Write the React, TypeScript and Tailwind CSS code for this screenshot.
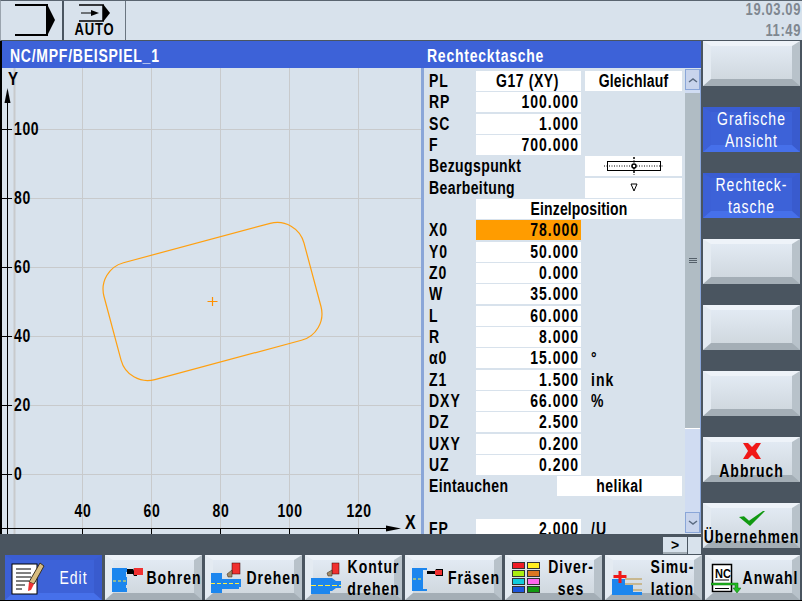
import type { ReactNode } from "react"

const FONT = "font-['Liberation_Sans',sans-serif]"

// narrow bitmap look of the panel font: small size stretched upward
function T({ children, className = "" }: { children: ReactNode; className?: string }) {
  return <span className={`inline-block scale-y-125 whitespace-nowrap ${className}`}>{children}</span>
}

// Softkey with bevelled edges
function Softkey({ active, children, className = "" }: { active?: boolean; children?: ReactNode; className?: string }) {
  const bevel = active
    ? "border-t-[#3a5dd2] border-l-[#3c60d6] border-r-[#395bce] border-b-[#4670ea] bg-[#3d62d8] text-white"
    : "border-t-[#eef3f9] border-l-[#e4ebf2] border-r-[#b8c2ca] border-b-[#a4aeb6] bg-gradient-to-b from-[#e2eaf3] to-[#d0d8df] text-black"
  return (
    <div className={`border-t-[5px] border-l-[8px] border-r-[8px] border-b-[7px] h-[45px] box-border ${bevel} ${className}`}>
      <div className="-mx-[8px] -mt-[5px] -mb-[7px] h-[45px] flex items-center">{children}</div>
    </div>
  )
}

function Label({ lines, className = "" }: { lines: string[]; className?: string }) {
  return (
    <div className={`text-center font-bold text-[14px] leading-[22px] tracking-[1px] ${className}`}>
      {lines.map((l) => (
        <div key={l}>
          <T>{l}</T>
        </div>
      ))}
    </div>
  )
}

function EditIcon() {
  return (
    <svg width="34" height="34" viewBox="0 0 34 34" className="ml-[6px] shrink-0">
      <rect x="1" y="3" width="25" height="30" fill="#fff" stroke="#000" />
      <path d="M5 8h15M5 12h15M5 16h15M5 20h13M5 24h9M5 28h6" stroke="#000" />
      <path d="M29 2l4 3-10 18-5-2z" fill="#d8bd80" stroke="#3a3020" />
      <path d="M18 21l5 2-3 6-3 1z" fill="#ee3333" />
    </svg>
  )
}

function DrillIcon() {
  return (
    <svg width="34" height="28" viewBox="0 0 34 28" className="ml-[7px] mt-[7px] shrink-0">
      <path d="M0 1h15v4h-1v5h1v8h-1v3h1v4H0z" fill="#1c86ee" />
      <path d="M1 14h13" stroke="#ffee44" strokeDasharray="3 2" />
      <path d="M15 2h6v2l1-3h3v8h-3l-1-2h-6z" fill="#000" />
      <rect x="22" y="1" width="9" height="7" fill="#f03030" />
    </svg>
  )
}

function MillIcon() {
  return (
    <svg width="34" height="28" viewBox="0 0 34 28" className="ml-[7px] shrink-0">
      <path d="M0 4h15v2h-4v19h4v2H0z" fill="#1c86ee" />
      <path d="M1 15h10" stroke="#ffee44" strokeDasharray="3 2" />
      <path d="M15 7h8l1-2h7v7h-7l-1-2h-8z" fill="#000" />
      <rect x="23" y="6" width="7" height="5" fill="#f03030" />
    </svg>
  )
}

function TurnIcon() {
  return (
    <svg width="34" height="34" viewBox="0 0 34 34" className="ml-[6px] shrink-0">
      <path d="M0 12h11v6h19v8h-2v2H11v4H0z" fill="#1c86ee" />
      <path d="M0 22.5h30" stroke="#ffee44" strokeDasharray="4 2" />
      <rect x="21" y="2" width="8" height="11" fill="#f03030" stroke="#300" strokeWidth="0.5" />
      <path d="M21 9l-5 4 1 3h4z" fill="#a08a68" stroke="#302010" strokeWidth="0.5" />
    </svg>
  )
}

function ContourIcon() {
  return (
    <svg width="34" height="34" viewBox="0 0 34 34" className="ml-[6px] shrink-0">
      <path d="M0 17h21l4 3h5v7h-5l-4 3h-2v3H0z" fill="#1c86ee" />
      <path d="M0 24.5h30" stroke="#ffee44" strokeDasharray="5 2" />
      <rect x="21" y="2" width="7" height="11" fill="#f03030" stroke="#300" strokeWidth="0.5" />
      <path d="M21 9l-5 3 1 3h4z" fill="#a08a68" stroke="#302010" strokeWidth="0.5" />
    </svg>
  )
}

function ColorsIcon() {
  const colors = ["#ee1c25", "#ffee22", "#aaee11", "#dd7722", "#11ccdd", "#ff66ee", "#1c55dd", "#119911"]
  return (
    <div className="ml-[7px] grid grid-cols-[13px_13px] gap-x-[2px] gap-y-[1px] shrink-0">
      {colors.map((c) => (
        <div key={c} className="h-[7px] border border-[#333]" style={{ backgroundColor: c }} />
      ))}
    </div>
  )
}

function SimIcon() {
  return (
    <svg width="31" height="28" viewBox="0 0 31 28" className="ml-[7px] mt-[8px] shrink-0">
      <path d="M0 11h13v6h8v7h9v3H0z" fill="#1c86ee" />
      <path d="M13 10h17v2H13zM13 15h17v2H13zM21 21h9v2h-9z" fill="#c8b890" />
      <path d="M6.5 3h3v4h5v3h-5v5h-3v-5h-5V7h5z" fill="#f01818" />
    </svg>
  )
}

function NcIcon() {
  return (
    <svg width="30" height="36" viewBox="0 0 30 36" className="ml-[6px] shrink-0">
      <rect x="1.5" y="4.5" width="19" height="27" fill="#fff" stroke="#000" strokeWidth="1.5" />
      <text transform="translate(4 18) scale(1 1.2)" fontSize="11" fontWeight="700" fontFamily="Liberation Sans, sans-serif">NC</text>
      <path d="M4 20h14M4 28.5h14" stroke="#000" />
      <path d="M0 23h27v5h3l-4 5-4-5h2v-3H0z" fill="#22bb22" stroke="#0a6a0a" strokeWidth="0.5" />
    </svg>
  )
}

function ChartText({ x, y, anchor, size, children }: { x: number; y: number; anchor?: "middle"; size?: number; children: string }) {
  return (
    <text transform={`translate(${x} ${y}) scale(1 1.25)`} textAnchor={anchor} fontSize={size}>
      {children}
    </text>
  )
}

function Chart() {
  const vLines = [12, 80, 149, 218, 287, 356]
  const hLines = [129, 198, 267, 336, 405, 474]
  const yLabels = ["100", "80", "60", "40", "20", "0"]
  const xLabels = ["40", "60", "80", "100", "120"]
  return (
    <svg width="419" height="466" viewBox="0 68 419 466" className="block" fontFamily="Liberation Sans, sans-serif" fontWeight="700" fontSize="14" letterSpacing="0.6">
      {vLines.map((x) => (
        <line key={x} x1={x + 0.5} x2={x + 0.5} y1="68" y2="534" stroke="#c8cacc" strokeWidth={x === 12 ? 2 : 1} />
      ))}
      {hLines.map((y) => (
        <line key={y} x1="0" x2="419" y1={y + 0.5} y2={y + 0.5} stroke="#c8cacc" />
      ))}
      <line x1="5.5" x2="5.5" y1="96" y2="534" stroke="#000" />
      <path d="M5.5 88l3 15h-6z" fill="#000" />
      <line x1="0" x2="388" y1="528.5" y2="528.5" stroke="#000" />
      <path d="M399 528.5l-15 -3v6z" fill="#000" />
      {hLines.map((y) => (
        <line key={y} x1="0" x2="10" y1={y + 0.5} y2={y + 0.5} stroke="#000" />
      ))}
      {vLines.slice(1).map((x) => (
        <line key={x} x1={x + 0.5} x2={x + 0.5} y1="528" y2="534" stroke="#000" />
      ))}
      <ChartText x={6} y={85} size={15}>Y</ChartText>
      <ChartText x={403} y={529} size={16}>X</ChartText>
      {yLabels.map((l, i) => (
        <ChartText key={l} x={12} y={hLines[i] + 6}>{l}</ChartText>
      ))}
      {xLabels.map((l, i) => (
        <ChartText key={l} x={vLines[i + 1] + 1} y={517} anchor="middle">{l}</ChartText>
      ))}
      <g transform="rotate(-15 210.5 301.5)" fill="none" stroke="#ffa010" strokeWidth="1.2">
        <rect x="107" y="241" width="207" height="121" rx="27.6" />
      </g>
      <path d="M205.5 301.5h10M210.5 297v9" stroke="#ff9000" strokeWidth="1.2" />
    </svg>
  )
}

type Row = { label: string; value?: string; unit?: string; box?: string; hot?: boolean; center?: boolean }

const rows: Row[] = [
  { label: "PL", value: "G17 (XY)", box: "Gleichlauf", center: true },
  { label: "RP", value: "100.000" },
  { label: "SC", value: "1.000" },
  { label: "F", value: "700.000" },
]
const rows2: Row[] = [
  { label: "X0", value: "78.000", hot: true },
  { label: "Y0", value: "50.000" },
  { label: "Z0", value: "0.000" },
  { label: "W", value: "35.000" },
  { label: "L", value: "60.000" },
  { label: "R", value: "8.000" },
  { label: "α0", value: "15.000", unit: "°" },
  { label: "Z1", value: "1.500", unit: "ink" },
  { label: "DXY", value: "66.000", unit: "%" },
  { label: "DZ", value: "2.500" },
  { label: "UXY", value: "0.200" },
  { label: "UZ", value: "0.200" },
]

function FormRow({ row }: { row: Row }) {
  return (
    <div className="h-[21.33px] flex items-start">
      <div className="w-[47px] shrink-0 h-[20px] leading-[21px]">
        <T>{row.label}</T>
      </div>
      <div
        className={`w-[105px] shrink-0 h-[20px] leading-[21px] pr-[2px] ${row.hot ? "bg-[#ff9c00]" : "bg-white"} ${row.center ? "text-center tracking-[0.6px]" : "text-right"}`}
      >
        <T>{row.value}</T>
      </div>
      {row.box && (
        <div className="ml-[4px] w-[97px] h-[20px] leading-[21px] bg-white text-center tracking-[0.2px]">
          <T>{row.box}</T>
        </div>
      )}
      {row.unit && (
        <div className="ml-[10px] h-[20px] leading-[21px]">
          <T>{row.unit}</T>
        </div>
      )}
    </div>
  )
}

function WideRow({ label, children }: { label: string; children: ReactNode }) {
  return (
    <div className="h-[21.33px] flex items-start">
      <div className="w-[156px] shrink-0 h-[20px] leading-[21px] tracking-[0.4px]">
        <T>{label}</T>
      </div>
      <div className="w-[97px] h-[20px] bg-white flex items-center justify-center">{children}</div>
    </div>
  )
}

function Form() {
  return (
    <div className="flex-1 overflow-hidden pt-[3px] pl-[5px] text-[14px] tracking-[1px] text-black font-bold">
      {rows.map((r) => (
        <FormRow key={r.label} row={r} />
      ))}
      <WideRow label="Bezugspunkt">
        <svg width="60" height="18" viewBox="0 0 60 18">
          <rect x="3.5" y="4.5" width="53" height="9" fill="none" stroke="#000" />
          <path d="M0 9h60" stroke="#000" strokeDasharray="1 1.5" />
          <path d="M30 0v18" stroke="#000" strokeWidth="1.5" strokeDasharray="2 1.5" />
          <circle cx="30" cy="9" r="2" fill="#fff" stroke="#000" strokeWidth="1.5" />
        </svg>
      </WideRow>
      <WideRow label="Bearbeitung">
        <svg width="8" height="9" viewBox="0 0 8 9">
          <path d="M1 1h6L4 8z" fill="none" stroke="#000" />
        </svg>
      </WideRow>
      <div className="h-[21.33px] flex items-start">
        <div className="ml-[47px] w-[206px] h-[20px] leading-[21px] bg-white text-center tracking-[0.15px]">
          <T>Einzelposition</T>
        </div>
      </div>
      {rows2.map((r) => (
        <FormRow key={r.label} row={r} />
      ))}
      <div className="h-[21.33px] flex items-start">
        <div className="w-[128px] shrink-0 h-[20px] leading-[21px] tracking-[0.4px]">
          <T>Eintauchen</T>
        </div>
        <div className="w-[125px] h-[20px] leading-[21px] bg-white text-center tracking-[0.4px]">
          <T>helikal</T>
        </div>
      </div>
      <div className="h-[21.33px]" />
      <FormRow row={{ label: "FP", value: "2.000", unit: "/U" }} />
    </div>
  )
}

function Scrollbar() {
  return (
    <div className="w-[16px] shrink-0 flex flex-col bg-[#d0dcf2] border-r border-[#8aa6d8] my-[1px]">
      <div className="h-[21px] border border-[#8aa6d8] bg-[#c8d4ec] flex items-center justify-center">
        <svg width="10" height="6" viewBox="0 0 10 6">
          <path d="M1 5l4-3 4 3" fill="none" stroke="#5a6a80" strokeWidth="1.5" />
        </svg>
      </div>
      <div className="mt-[3px] h-[336px] bg-[#b0bcc4] border-b border-white flex flex-col items-center justify-center gap-[1px]">
        <div className="w-[8px] h-[1px] bg-[#55606a]" />
        <div className="w-[8px] h-[1px] bg-[#55606a]" />
        <div className="w-[8px] h-[1px] bg-[#55606a]" />
      </div>
      <div className="flex-1" />
      <div className="h-[21px] border border-[#8aa6d8] bg-[#c8d4ec] flex items-center justify-center">
        <svg width="10" height="6" viewBox="0 0 10 6">
          <path d="M1 1l4 3 4-3" fill="none" stroke="#5a6a80" strokeWidth="1.5" />
        </svg>
      </div>
    </div>
  )
}

function TopBar() {
  return (
    <div className="h-[41px] flex bg-[#d8e2ec] border-b border-[#4a5560] border-t border-t-[#5a6570] border-l border-l-[#9aa4ae]">
      <div className="w-[63px] border-r-2 border-[#4a5560]">
        <svg width="62" height="38" viewBox="0 0 62 38">
          <path d="M14 4h32v30H14" fill="none" stroke="#000" strokeWidth="2" />
          <path d="M46 3l8 16-8 16z" fill="#000" />
        </svg>
      </div>
      <div className="w-[62px] border-r border-[#6a7580] flex flex-col items-center font-bold text-[13px] leading-[14px] tracking-[0.8px]">
        <svg width="40" height="22" viewBox="0 0 40 22">
          <path d="M4 4h24v16H4" fill="none" stroke="#000" strokeWidth="1.5" />
          <path d="M6 12h12" stroke="#000" />
          <path d="M16 9l8 3-8 3z" fill="#000" />
          <path d="M28 3l7 9-7 9z" fill="#000" />
        </svg>
        <T>AUTO</T>
      </div>
      <div className="flex-1 flex flex-col items-end justify-center pr-[1px] pb-[2px] text-[#7f8790] font-bold text-[13px] leading-[21px] tracking-[0.6px]">
        <T>19.03.09</T>
        <T>11:49</T>
      </div>
    </div>
  )
}

export default function App() {
  return (
    <div className={`w-[802px] h-[602px] overflow-hidden flex flex-col bg-[#4a5560] ${FONT} border-b border-white`}>
      <TopBar />
      <div className="flex h-[493px]">
        <div className="flex-1 min-w-0 flex flex-col border-l-2 border-black">
          <div className="flex h-[27px] bg-[#3d62d8] text-white font-bold text-[14px] tracking-[0.75px] leading-[31px]">
            <div className="w-[420px] pl-[8px]">
              <T>NC/MPF/BEISPIEL_1</T>
            </div>
            <div className="pl-[5px]">
              <T>Rechtecktasche</T>
            </div>
          </div>
          <div className="flex h-[466px] bg-[#d8e2ec]">
            <div className="w-[419px] shrink-0">
              <Chart />
            </div>
            <div className="w-[3px] shrink-0 bg-[#8aa6d8]" />
            <Form />
            <Scrollbar />
          </div>
        </div>
        <div className="w-[101px] shrink-0 flex flex-col gap-[21px] pl-[2px] pr-[2px]">
          <Softkey />
          <Softkey active>
            <Label lines={["Grafische", "Ansicht"]} className="w-full font-normal" />
          </Softkey>
          <Softkey active>
            <Label lines={["Rechteck-", "tasche"]} className="w-full font-normal tracking-[1.4px]" />
          </Softkey>
          <Softkey />
          <Softkey />
          <Softkey />
          <Softkey>
            <div className="w-full self-start pt-[6px] flex flex-col items-center">
              <svg width="20" height="16" viewBox="0 0 20 16">
                <path d="M1 0h5l4 4 4-4h5l-5 8 5 8h-5l-4-4-4 4H1l5-8z" fill="#f01818" />
              </svg>
              <Label lines={["Abbruch"]} className="mt-[1px]" />
            </div>
          </Softkey>
          <Softkey>
            <div className="w-full self-start pt-[7px] flex flex-col items-center">
              <svg width="26" height="16" viewBox="0 0 26 18" preserveAspectRatio="none">
                <path d="M0 8l5-1 5 5L24 1l2 0-15 17z" fill="#119911" />
              </svg>
              <Label lines={["Übernehmen"]} className="tracking-[0.4px]" />
            </div>
          </Softkey>
        </div>
      </div>
      <div className="h-[21px] flex justify-end pr-[101px] pt-[3px]">
        <div className="h-[17px] flex">
          <div className="w-[24px] bg-[#d8e2ec] border-b-2 border-[#a4aeb6] flex items-center justify-center font-bold text-[14px] leading-none">&gt;</div>
          <div className="w-[13px] ml-[1px] bg-[#d8e2ec]" />
        </div>
      </div>
      <div className="h-[46px] flex gap-[3px] pl-[5px] pr-[1px] border-b border-black">
        <Softkey active className="w-[97px]">
          <EditIcon />
          <Label lines={["Edit"]} className="flex-1 font-normal" />
        </Softkey>
        <Softkey className="w-[97px]">
          <DrillIcon />
          <Label lines={["Bohren"]} className="flex-1" />
        </Softkey>
        <Softkey className="w-[97px]">
          <TurnIcon />
          <Label lines={["Drehen"]} className="flex-1" />
        </Softkey>
        <Softkey className="w-[97px]">
          <ContourIcon />
          <Label lines={["Kontur", "drehen"]} className="flex-1" />
        </Softkey>
        <Softkey className="w-[97px]">
          <MillIcon />
          <Label lines={["Fräsen"]} className="flex-1" />
        </Softkey>
        <Softkey className="w-[97px]">
          <ColorsIcon />
          <Label lines={["Diver-", "ses"]} className="flex-1" />
        </Softkey>
        <Softkey className="w-[97px]">
          <SimIcon />
          <Label lines={["Simu-", "lation"]} className="flex-1" />
        </Softkey>
        <Softkey className="w-[95px]">
          <NcIcon />
          <Label lines={["Anwahl"]} className="flex-1 tracking-[0.6px]" />
        </Softkey>
      </div>
    </div>
  )
}
